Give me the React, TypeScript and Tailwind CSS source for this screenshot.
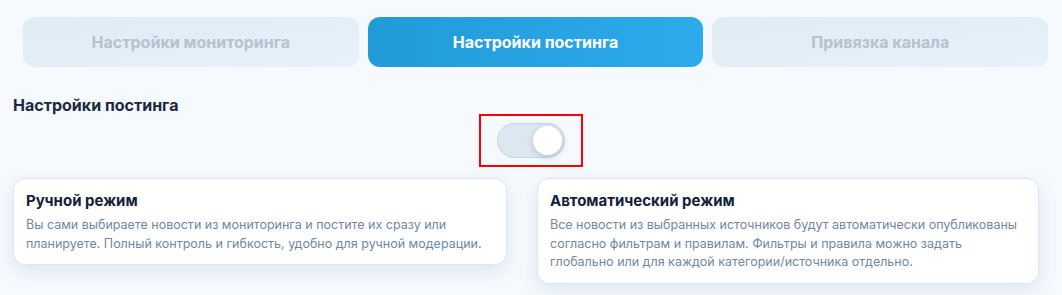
const tabs = [
  { label: 'Настройки мониторинга', active: false },
  { label: 'Настройки постинга', active: true },
  { label: 'Привязка канала', active: false },
]

function ModeCard({ title, text }: { title: string; text: string }) {
  return (
    <div className="rounded-[12px] border border-[#d6e9f7] bg-white px-3 pt-[13px] pb-[11px] shadow-[0_6px_18px_rgba(120,150,190,0.18)]">
      <div className="text-[15px] leading-[18px] font-bold text-[#132238]">{title}</div>
      <div className="mt-[6px] text-[12.5px] leading-[18.5px] text-[#6f88a3]">{text}</div>
    </div>
  )
}

export default function App() {
  return (
    <div
      className="h-[295px] w-[1062px] overflow-hidden bg-[#f6f9fd]"
      style={{ fontFamily: 'Inter, "Noto Sans", sans-serif' }}
    >
      <div className="flex gap-[9px] pt-[17px] pr-[14px] pl-[23px]">
        {tabs.map((t) => (
          <div
            key={t.label}
            className={
              t.active
                ? 'flex h-[50px] flex-1 items-center justify-center rounded-[12px] bg-gradient-to-r from-[#219bd8] to-[#2caaec] text-[16px] font-bold text-white'
                : 'flex h-[50px] flex-1 items-center justify-center rounded-[12px] bg-gradient-to-br from-[#e1ebf4] to-[#e7f1fa] text-[16px] font-bold text-[#b4c3d1]'
            }
          >
            {t.label}
          </div>
        ))}
      </div>

      <div className="mt-[29px] px-[13px] text-[16px] leading-[18px] font-bold text-[#1a2a40]">
        Настройки постинга
      </div>

      <div className="mt-0 flex justify-center">
        <div className="flex h-[53px] w-[104px] items-center justify-center border-2 border-[#ff0000]">
          <div className="flex h-[35px] w-[68px] items-center justify-end rounded-full border border-[#bcd6ea] bg-[#dde7f0] pr-[2px]">
            <div className="h-[29px] w-[29px] rounded-full bg-white shadow-[0_2px_6px_rgba(80,110,150,0.3)]" />
          </div>
        </div>
      </div>

      <div className="mt-[11px] grid grid-cols-[494px_502px] items-start gap-[30px] px-[13px]">
        <ModeCard
          title="Ручной режим"
          text="Вы сами выбираете новости из мониторинга и постите их сразу или планируете. Полный контроль и гибкость, удобно для ручной модерации."
        />
        <ModeCard
          title="Автоматический режим"
          text="Все новости из выбранных источников будут автоматически опубликованы согласно фильтрам и правилам. Фильтры и правила можно задать глобально или для каждой категории/источника отдельно."
        />
      </div>
    </div>
  )
}
